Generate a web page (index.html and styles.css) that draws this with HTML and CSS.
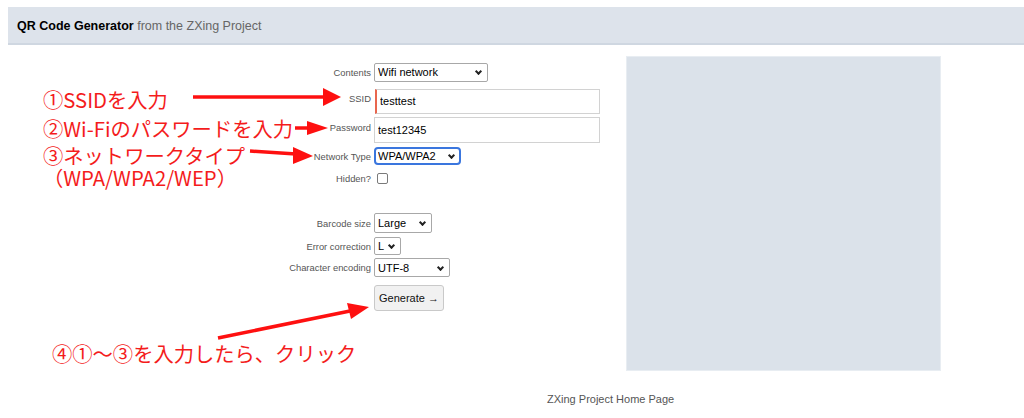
FILE: index.html
```html
<!DOCTYPE html>
<html lang="ja">
<head>
<meta charset="UTF-8">
<title>ZXing QR Code Generator</title>
<link rel="stylesheet" href="styles.css">
</head>
<body>

<!-- Header -->
<div class="header">
    <b>QR Code Generator</b> <span class="sub">from the ZXing Project</span>
</div>

<div class="main">
    <!-- Form -->
    <form class="form-grid">
        <label>Contents</label>
        <span class="sel w-contents">
            <select><option>Wifi network</option></select>
        </span>

        <label class="lift">SSID</label>
        <input type="text" class="text ssid" value="testtest">

        <label class="lift">Password</label>
        <input type="text" class="text" value="test12345">

        <label>Network Type</label>
        <span class="sel w-type">
            <select class="focused"><option>WPA/WPA2</option></select>
        </span>

        <label>Hidden?</label>
        <span><input type="checkbox" class="check"></span>

        <div class="spacer"></div>

        <label>Barcode size</label>
        <span class="sel w-size">
            <select><option>Large</option></select>
        </span>

        <label>Error correction</label>
        <span class="sel w-ec">
            <select><option>L</option></select>
        </span>

        <label>Character encoding</label>
        <span class="sel w-enc">
            <select><option>UTF-8</option></select>
        </span>

        <span></span>
        <span><button type="button" class="generate">Generate &rarr;</button></span>
    </form>

    <!-- Barcode image placeholder -->
    <div class="preview"></div>
</div>

<div class="footer">ZXing Project Home Page</div>

<!-- Red annotations drawn over the page -->
<div class="notes">
    <div class="note n1">①SSIDを入力</div>
    <div class="note n2">②Wi-Fiのパスワードを入力</div>
    <div class="note n3">③ネットワークタイプ</div>
    <div class="note n4">（WPA/WPA2/WEP）</div>
    <div class="note n5">④①～③を入力したら、クリック</div>

    <svg class="arrows" width="1024" height="418" viewBox="0 0 1024 418">
        <g stroke="#fe1010" stroke-width="3.5" fill="none">
            <line x1="193" y1="97" x2="326" y2="97"/>
            <line x1="295" y1="128" x2="309" y2="128"/>
            <line x1="250" y1="151" x2="296" y2="154"/>
            <line x1="218" y1="338" x2="350" y2="311"/>
        </g>
        <g fill="#fe1010">
            <polygon points="323,88 341,97 323,106"/>
            <polygon points="307,121 328,128 307,135"/>
            <polygon points="293,147 313,156 293,164"/>
            <polygon points="351,319 369,307 347,303"/>
        </g>
    </svg>
</div>

</body>
</html>
```

FILE: styles.css
```css
/* General */
body {
    margin: 7px 0 0 8px;
    font-family: 'Liberation Sans', Arial, sans-serif;
    color: #000;
    background: #fff;
    position: relative;
}

/* Header bar */
.header {
    background: #dde3eb;
    border-bottom: 2px solid #cfd7e1;
    height: 36px;
    line-height: 38px;
    padding-left: 9px;
    font-size: 12.5px;
}

.header .sub {
    color: #666;
}

/* Main area: form + preview */
.main {
    display: flex;
    align-items: flex-start;
    margin-top: 11px;
}

.form-grid {
    display: grid;
    grid-template-columns: 363px 226px;
    grid-template-rows: 28px 30px 28px 24px 20px 22px 26px 20px 23px 38px;
    column-gap: 3px;
    align-items: center;
    padding-top: 2px;
    margin: 0;
}

.form-grid label {
    text-align: right;
    font-size: 9.4px;
    color: #555;
}

.form-grid label.lift {
    margin-bottom: 6px;
}

.spacer {
    grid-column: span 2;
}

/* Text inputs */
.text {
    box-sizing: border-box;
    width: 226px;
    height: 26px;
    border: 1px solid #d2d2d2;
    padding: 0 3px;
    font-family: 'Liberation Sans', Arial, sans-serif;
    font-size: 11px;
    margin: 0;
    outline: none;
}

.text.ssid {
    height: 25px;
    border-left: 2px solid #e8664f;
    margin-left: 1px;
    width: 225px;
}

/* Selects */
.sel {
    position: relative;
    display: inline-block;
    justify-self: start;
}

.sel select {
    -webkit-appearance: none;
    appearance: none;
    box-sizing: border-box;
    width: 100%;
    height: 19px;
    border: 1px solid #a8a8a8;
    border-radius: 2px;
    background: #fff;
    padding: 0 14px 0 3px;
    font-family: 'Liberation Sans', Arial, sans-serif;
    font-size: 11px;
    color: #000;
    margin: 0;
    display: block;
}

.sel::after {
    content: "";
    position: absolute;
    right: 7px;
    top: 50%;
    width: 3px;
    height: 3px;
    margin-top: -3px;
    border-right: 2px solid #222;
    border-bottom: 2px solid #222;
    transform: rotate(45deg);
    pointer-events: none;
}

.sel select.focused {
    height: 18px;
    border: 2px solid #3a76de;
    border-radius: 4px;
    padding-left: 2px;
}

.w-contents { width: 114px; }
.w-type { width: 87px; }
.w-size { width: 58px; }
.w-size select { height: 20px; }
.w-ec { width: 27px; }
.w-ec select { height: 18px; padding-left: 3px; }
.w-enc { width: 76px; }

/* Checkbox */
.check {
    -webkit-appearance: none;
    appearance: none;
    width: 11px;
    height: 11px;
    margin: 0 0 0 3px;
    border: 1px solid #7a7a7a;
    border-radius: 2px;
    background: #fff;
    display: block;
}

/* Generate button */
.generate {
    height: 26px;
    width: 70px;
    padding: 0;
    background: #f1f1f1;
    border: 1px solid #c9c9c9;
    border-radius: 3px;
    font-family: 'Liberation Sans', Arial, sans-serif;
    font-size: 11px;
    color: #111;
    display: block;
}

/* Barcode preview box */
.preview {
    width: 313px;
    height: 313px;
    margin-left: 26px;
    background: #dbe2ea;
    border: 1px solid #e8edf2;
}

/* Footer */
.footer {
    padding-top: 22px;
    padding-left: 539px;
    font-size: 11px;
    line-height: 13px;
    color: #555;
}

/* Annotation layer */
.notes {
    position: absolute;
    left: -8px;
    top: -7px;
    width: 1024px;
    height: 418px;
    pointer-events: none;
}

.note {
    position: absolute;
    font-family: 'Noto Sans CJK JP', sans-serif;
    font-size: 20.3px;
    line-height: 20px;
    color: #f41c1c;
    white-space: nowrap;
}

.n1 { left: 43px; top: 89px; }
.n2 { left: 43px; top: 118px; }
.n3 { left: 43px; top: 145px; }
.n4 { left: 43px; top: 167px; }
.n5 { left: 52px; top: 343px; }

.arrows {
    position: absolute;
    left: 0;
    top: 0;
}
```
